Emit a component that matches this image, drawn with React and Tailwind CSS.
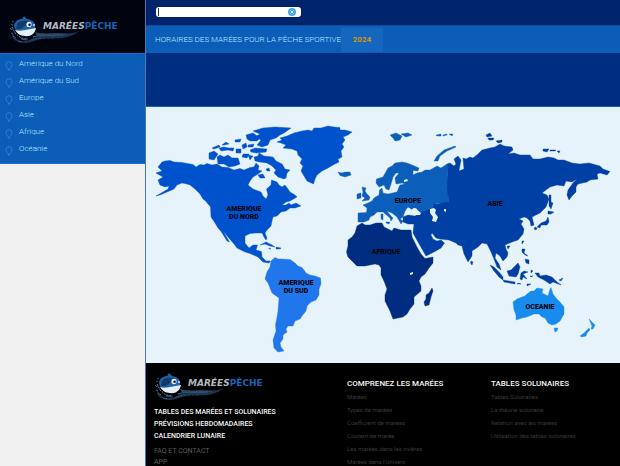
const REGIONS = ['Amérique du Nord', 'Amérique du Sud', 'Europe', 'Asie', 'Afrique', 'Océanie']

const MAIN_LINKS = ['Tables des marées et solunaires', 'Prévisions hebdomadaires', 'Calendrier lunaire']

const TIDE_LINKS = [
  'Marées',
  'Types de marées',
  'Coefficient de marées',
  'Courant de marée',
  'Les marées dans les rivières',
  "Marées dans l'Univers",
]

const SOLUNAR_LINKS = ['Tables Solunaires', 'La théorie solunaire', 'Relation avec les marées', 'Utilisation des tables solunaires']

const CONTINENTS = [
  {
    id: 'north-america',
    fill: '#0052cc',
    shapes: [
      // mainland
      'M162 162L165 161L170 160.500L174 162L182 162.500L193 164.500L196 167L200 164.500L204 165L207 163.500L212 165L217 164L222 167L228 167.500L234 170L240 168.500L244 170L250 167.500L254 167L256 163L259 166L258 170L262 171L258 174L253 177L250 181L248 185L253 189L261 192L263 196L266 199L268 195L266.500 189L271 185L271.500 180L277 182L279 185L282 187L285 185L288 189L290 192L295 195L297 197L290 201L286 202L282 205L286 205L289 203L291 205L296 203L301 206L295 208L290 208L286 211L281 212L277 216L273 217L272 221L271 226L267 230L265 233L267 238L266 240L264 237L262 233L256 233L250 233.500L245 236L245 243L249 248L253 245L257.500 245L256 250L261.500 251.500L262 257L266 261L270.500 261L269 263L263 262L258 257L250 253.500L245 252L237 248L234 244L228 237L223 231L226 236L229.500 242L227 241L221.500 232L218 228L215 223L211 217L210.500 207L207 202L203 199L200 194L195 189L190 185L187 184L182 183L177 185L174 189L167 192L160 195L156 196L163 192L168 189L169 186L165 187L160 185L158 180L163 177L156 173L162 171L158 167Z',
      // arctic islands
      'M209 153L214 151L218 154L214 160L209 159ZM217 157L220 155L224 157L228 155L232 158L238 158L240 164L235 166L229 167L224 164L218 164Z',
      'M212 148L219 145L220 147L214 149ZM219 148L224 147L229 148L234 148L233 151L228 150L221 151ZM222 145L226 142L229 144L224 145ZM235 140L241 139L240 142L235 142ZM242 145L246 143L247 147L243 149ZM243 154L249 154L247 158L242 157ZM248 145L254 144L253 147L248 147ZM250 150L255 148L267 149L266 152L256 153L251 152ZM236 149L241 149L241 153L236 153ZM248 155L253 156L250 160Z',
      'M246 135L253 133L260 138L257 141L250 141L247 139ZM253 131L263 128L275 127L291 128L284 133L280 135L276 138L270 140L268 145L262 147L257 145L261 140L255 137L260 134Z',
      'M254 157L258 156L259 153L264 156L273 157L276 161L282 164L285 169L290 170L287 173L286 178L284 179L278 177L274 173L276 170L272 166L267 163L260 162L255 161ZM258 175L263 174L265 178L260 178ZM266 169L269 168L270 171L267 171Z',
      // greenland
      'M277 142L282 140L280 138L287 136L294 133L302 131L308 130L312 131L314 128L321 128L328 126L334 127L340 127.500L340 130L345 130L352 132L348 135L343 137L345 140L342 144L344 147L341 151L342 157L338 159L339 162L333 165L328 168L322 171L317 175L315 179L313.500 184L307 181L304 176L301 171L303 166L300 163L302 159L298 155L297 151L292 149L283 148L286 145L281 143Z',
      // caribbean
      'M260 245L266 242L272 245L275 247L270 246L265 244ZM276 247L281 248L280 249L276 249ZM269 248L271 249L269 249ZM205 200L211 206L208 204Z',
    ],
  },
  {
    id: 'south-america',
    fill: '#2176eb',
    shapes: [
      'M271 261L275 257.500L278 259L282 259L290 259.500L295 263L298 266L302 267.500L304 270L306 273L310 275L315 276L320.500 278L321 284L319 289L319 295L316 300L311 302L307 306L306 311L302 316L300 319L295 321L293 326L288 326L286 329L287 332L283 335L283 339L280 343L281 347L284 351L278 352L274 348L273 340L276 331L275.500 325L277 317L278 311L279 298L272 293L268 283L265 279L267 272L270 267Z',
    ],
  },
  {
    id: 'europe',
    fill: '#0b5fba',
    shapes: [
      'M358 213L366.500 212.500L367 208L363 205L368 203L372 201L374 198L379 195L379.500 190L382 188L383 193L388 194L397 192L399 187L400 185L405 184L402 183L396 184L395 178L399 173L396 173L393 177L391 184L389 190L386 189L384 185L379 187L376 183L376.500 179L383 177L388 168L392 166L395 163L402 162L407 163L412 165L419 168L418 171L413 170.500L413 175L417 173L422 172L425 170L430 170L437 166L441 168L447 164L448 178L448 190L449 203L436 203L434 209L428 212L420 213L416 208L413 208L414 211L408 207L405 211L403 217L400 219L403 221L401 224L397 217L392 213L387 211L390 215L393 218L391 221L390 218L383 212L377 212L374 215L370 217L369 220L364 222L358 222Z',
      'M338 172L342 173L345 172L350 172L351 175L345 177L340 175.500ZM362 187L366 188L365 191L367 194L370 197L369 200L362 201L365 198L362 196L363 192ZM357 194L361 193L361 198L357 199Z',
      'M434 161L437 156L444 150L455 146L456 147L447 151L440 156L438 161ZM381 214L383 214L383 220L381 219ZM386 222L390 222L389 224L386 223Z',
      'M390 135L396 133L402 136L400 140L395 141L393 138ZM401 134L408 133L412 135L406 137ZM436 135L441 134L441 136L437 136ZM443 135L447 134L447 135L443 136ZM449 134L453 134L452 136Z',
    ],
  },
  {
    id: 'asia',
    fill: '#003fa3',
    shapes: [
      'M447 164L450 163L454 166L456 164L454 159L458 156L461 160L460 165L459 171L464 169L463 158L466 159L470 157L473 158L478 154L482 150L490 148L495 147L500 144L504 146L512 147L513 150L508 154L514 153L520 155L530 155L533 159L540 159L548 157L554 158L558 160L564 160L572 163L580 164L589 163L600 166L603 169L610 171.500L607 175L600 173L597 174L598 179L590 180L587 182L578 184L576 187L576 192L572 196L569 200L567 195L568 190L573 183L577 179L572 182L566 181L564 186L557 185L550 187L542 193L547 195L549 199L546 207L540 213L532 217L534 225L531 226L530 221L527 218L524 217L519 219L523 221L521 224L524 229L523 234L518 240L512 242L505 245L506 249L508 253L507 257L503 261L500 256L496 253L495 258L499 264L501 270L497 267L494 259L491 252L489 248L487 244L482 243L478 247L472 251L472 256L468 262L464 254L462 246L458 245L456 243L449 240L440 239L436 238L432 233L431 235L433 239L437 241L441 240L444.500 243L441 248L434 252L426 256L422 249L418 242L413 233L414 224L408 224L403 222L403 217L408 215L415 216L420 213L433 208L434 204L449 202L447 188L448 176Z',
      'M486 135L490 133L492 136L487 137ZM488 138L494 138L493 140L489 140ZM496 141L502 140L502 142L498 143ZM543 149L549 149L547 152L543 151ZM550 150L556 150L555 151L550 151ZM557 151L560 151L559 153Z',
      'M549 195L551 195L551 202L553 203L551 209L549 206ZM548 211L554 212L551 214L548 214ZM548 217L549 222L547 225L541 225L540 228L537 227L541 223L546 221ZM535 227L537 228L536 230L534 229Z',
      'M471 261L473 262L472 265L470.500 263ZM490 265L494 267L499 272L503 277L503 280L499 277L494 271ZM503 280L509 281L515 282L515 284L504 282ZM518 283L521 284L517 284ZM527 284L531 284L527 286Z',
      'M507 271L511 270L516 265L518 263L520 267L518 274L516 277L509 276ZM521 273L524 271L528 272L523 274L527 279L523 277L522 280L520 279ZM522 249L525 249L524 253L528 256L525 255L522 252ZM525 259L529 260L529 264L526 263ZM522 241L524 241L522 244ZM507 246L510 246L508 249ZM531 270L533 271L531 273ZM530 276L533 276L531 277Z',
      'M535 273L539 273L540 276L546 275L552 277L556 281L561 285L553 282L550 284L544 280L538 277ZM559 280L563 278L561 281Z',
    ],
  },
  {
    id: 'africa',
    fill: '#002d80',
    shapes: [
      'M357 226L362 223L365 225L370 225L376 223L382 223L384 227L392 231L394 228L401 230L411 230L412 237L417 247L421 254L425 258.500L433 257L433 263L429 268L425 274L421 277L419 281L421 286L421 291L414 297L414 304L410 309L407 314L403 317L398 318L393 319L390 311L385 301L385 295L387 289L384 281L381 275L381 268L379 265L375 264L365 266L357 266L352 261L348 257L346.500 252L348 246L348 240L352 237L355 233Z',
      'M432 288L433 291L431 297L429 305L425 306L424 302L426 299L426 295L429 293Z',
    ],
  },
  {
    id: 'oceania',
    fill: '#188ced',
    shapes: [
      'M513 302L517 299L522 297L525 296L527 294L531 291L534 291L537 288L543 289L542 293L548 296L550 289L551 287.500L553 294L556 298L560 302L564 307L564 314L560 321L556 324L552 325L548 323L545 318L542 317L539 314L534 314L527 317L522 318L516 320L516 315L514 310Z',
      'M554 328L558 328L557 331L555 332ZM589 319L592 322L595 325L593 329L591 329L592 326ZM589 328L590 330L587 333L586 336L582 337L580 336L584 333Z',
    ],
  },
]

// inland seas
const WATER = [
  'M406 212L407 209L409 208L411 210L414 208L417 210L421 213L420 215L414 215L409 214L405 215Z',
  'M430 209L434 208L436 210L435 213L438 217L436 222L432 221L433 217L430 213Z',
  'M444 209L446 209L446 212L444 211Z',
  'M410 273L413 272L413 274L410 275Z',
  'M404 180L407 179L408 181L404 182Z',
]

const MAP_LABELS = [
  { lines: ['AMERIQUE', 'DU NORD'], x: 244, y: 211 },
  { lines: ['AMERIQUE', 'DU SUD'], x: 296, y: 285 },
  { lines: ['EUROPE'], x: 408, y: 203 },
  { lines: ['ASIE'], x: 495, y: 206 },
  { lines: ['AFRIQUE'], x: 386, y: 254 },
  { lines: ['OCEANIE'], x: 540, y: 309 },
]

function Logo() {
  return (
    <a href="#" className="flex items-center" aria-label="MaréesPêche">
      <svg viewBox="0 0 116 28" className="w-[116px] h-7">
        <path d="M4 15C3 21 8 26 16 25C25 24 28 18 40 18C52 17 62 19 70 15C62 22 50 23 42 22C32 21 26 26 17 27C6 27 1 22 4 15Z" fill="#1c3450" />
        <path d="M26 16C36 19 44 16 60 18C50 21 38 20 28 20Z" fill="#2c4866" />
        <path d="M24 21C32 18 42 21 54 19M22 24C30 21 38 23 46 22" fill="none" stroke="#3c5b7c" strokeWidth=".6" strokeDasharray="3 1" />
        <path d="M5 9C6 5 10 3 13 3L15 0L18 3C24 4 27 7 26 12C25 17 21 19 15 18C9 18 5 14 5 9Z" fill="#1f61a6" />
        <path d="M8 8C11 4 17 4 21 6L16 10L12 13L7 13Z" fill="#123a6b" />
        <path d="M6 14C12 16 20 13 27 12C26 18 21 21 16 20C11 20 8 17 6 14Z" fill="#e4eef6" />
        <ellipse cx="20" cy="8.500" rx="2.600" ry="2.800" fill="#e6f3ff" />
        <circle cx="20.600" cy="8.800" r="1.300" fill="#06162b" />
        <circle cx="25" cy="9" r="1" fill="#cfe4f5" />
        <path d="M2 8L4 9M1 12L3 14M4 20L7 22M9 25L13 26M3 5L5 6M2 17L4 18M12 23L18 24M24 21L28 20" stroke="#3e74ab" strokeWidth=".8" />
        <path d="M3 11L6 17L12 22L19 23" fill="none" stroke="#86aaca" strokeWidth=".8" strokeDasharray="2 1" />
        <text x="34" y="13" fontFamily="DejaVu Sans" fontSize="9" fontWeight="700" fontStyle="italic" fill="#b4b9c2">
          MARÉES<tspan fill="#1b62b8" fontStyle="normal">PÊCHE</tspan>
        </text>
      </svg>
    </a>
  )
}

function Pin() {
  return (
    <svg viewBox="0 0 8 10" className="mt-1 h-[10px] w-2" fill="none" stroke="#2f8edb" strokeWidth="1" aria-hidden="true">
      <path d="M4 9.200C3.200 7.400 1 5.800 1 3.700A3 3 0 0 1 7 3.700C7 5.800 4.800 7.400 4 9.200Z" opacity=".75" />
      <path d="M3 9.300H5" opacity=".4" />
    </svg>
  )
}

function Sidebar() {
  return (
    <aside className="w-[146px] shrink-0 border-r border-[#4b78b5] bg-[#f0f0f0]">
      <div className="h-[53px] pl-[9px] pt-4 bg-[#00040f]">
        <Logo />
      </div>
      <nav className="border-y border-[#1870cf] bg-[#0b5db8] pt-px pb-[6px]">
        {REGIONS.map(name => (
          <a key={name} href="#" className="flex h-[17px] items-center gap-[6px] pl-[5px] text-[8px] font-light text-[#b4ecff]">
            <Pin />
            {name}
          </a>
        ))}
      </nav>
    </aside>
  )
}

function Header() {
  return (
    <header className="shrink-0">
      <div className="flex h-[25px] items-start bg-[#00246b] pl-[10px] pt-[7px]">
        <div className="flex h-[10px] w-[145px] items-center rounded-[3px] bg-white pr-[5px] pl-[2px]">
          <input
            type="text"
            aria-label="Rechercher"
            className="block h-2 min-w-0 grow border-l border-[#333] px-1 text-[7px] outline-none"
          />
          <button type="button" aria-label="Effacer" className="flex">
            <svg viewBox="0 0 8 8" className="size-2">
              <circle cx="4" cy="4" r="4" fill="#3fa5ec" />
              <path d="M2.600 2.600L5.400 5.400M5.400 2.600L2.600 5.400" stroke="#fff" strokeWidth="1" />
            </svg>
          </button>
        </div>
      </div>
      <div className="flex h-7 items-center border-t border-[#0f4a9c] bg-[#0b5db8] pl-[9px] text-[8px]">
        <h1 className="font-light text-[#b4ecff]">HORAIRES DES MARÉES POUR LA PÊCHE SPORTIVE</h1>
        <span className="flex h-6 w-[42px] items-center justify-center bg-[#1467bd] font-bold text-[#d0930f]">2024</span>
      </div>
      <div className="h-[54px] border-b border-[#1467bd] bg-[#002d80]" />
    </header>
  )
}

function WorldMap() {
  return (
    <svg viewBox="146 107 474 256" className="block w-full shrink-0 bg-[#e6f3fb]" role="img" aria-label="Carte du monde">
      {CONTINENTS.map(c => (
        <g key={c.id} fill={c.fill} stroke={c.fill} strokeWidth=".4" strokeLinejoin="round">
          {c.shapes.map(d => <path key={d} d={d} />)}
        </g>
      ))}
      <g fill="#e6f3fb">
        {WATER.map(d => <path key={d} d={d} />)}
      </g>
      <g fontFamily="Roboto" fontSize="7" fontWeight="900" textAnchor="middle" fill="#00050f">
        {MAP_LABELS.map(({ lines, x, y }) => (
          <text key={lines.join(' ')} x={x} y={y}>
            {lines.map((line, i) => <tspan key={line} x={x} dy={i * 8}>{line}</tspan>)}
          </text>
        ))}
      </g>
    </svg>
  )
}

function LinkColumn({ title, links }) {
  return (
    <div>
      <h2 className="mb-px text-[8px] leading-[10px] font-medium text-[#f5f5f5]">{title}</h2>
      <ul className="text-[6px] text-[#3a3a3a]">
        {links.map(link => <li key={link} className="leading-[13px]"><a href="#">{link}</a></li>)}
      </ul>
    </div>
  )
}

function Footer() {
  return (
    <footer className="grid grow grid-cols-[193px_144px_1fr] bg-black pl-2">
      <div className="pt-[10px]">
        <Logo />
        <ul className="mt-[5px] text-[7px] leading-3 font-medium uppercase text-[#f5f5f5]">
          {MAIN_LINKS.map(link => <li key={link}><a href="#">{link}</a></li>)}
        </ul>
        <ul className="mt-1 text-[7px] leading-[11px] text-[#5e5e5e]">
          <li><a href="#">FAQ ET CONTACT</a></li>
          <li><a href="#">APP</a></li>
        </ul>
      </div>
      <div className="pt-4">
        <LinkColumn title="COMPRENEZ LES MARÉES" links={TIDE_LINKS} />
      </div>
      <div className="pt-4">
        <LinkColumn title="TABLES SOLUNAIRES" links={SOLUNAR_LINKS} />
      </div>
    </footer>
  )
}

export default function App() {
  return (
    <div className="flex h-screen overflow-hidden font-['Roboto',sans-serif]">
      <Sidebar />
      <main className="flex min-w-0 grow flex-col">
        <Header />
        <WorldMap />
        <Footer />
      </main>
    </div>
  )
}
